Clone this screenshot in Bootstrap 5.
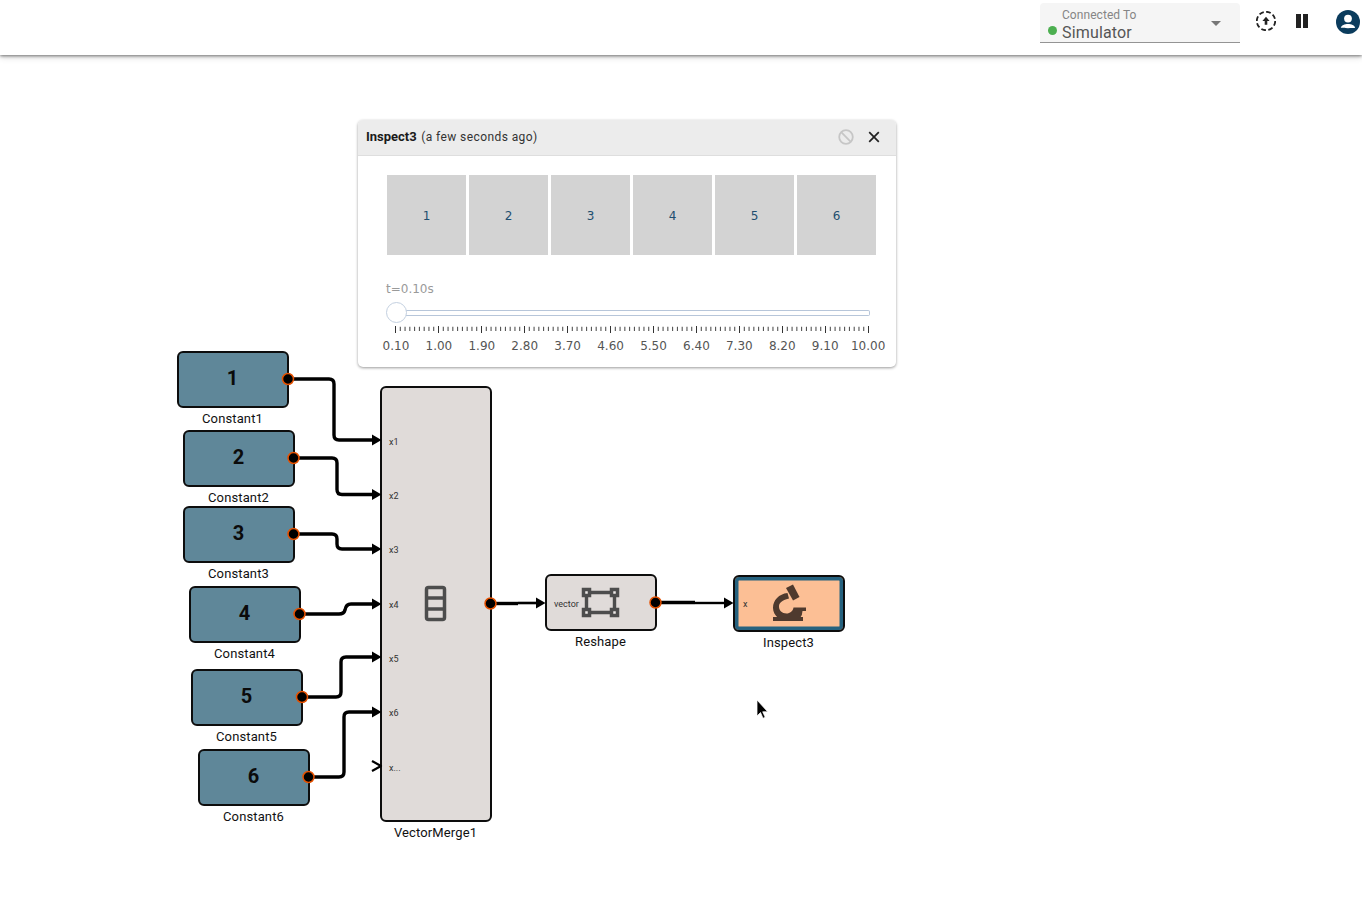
<!DOCTYPE html>
<html lang="en">
<head>
<meta charset="utf-8">
<title>Inspect3</title>
<link rel="stylesheet" href="https://cdn.jsdelivr.net/npm/bootstrap@5.3.0/dist/css/bootstrap.min.css">
<style>
html,body{height:100%;overflow:hidden;background:#fff}
body{font-family:Roboto,"Liberation Sans",sans-serif;color:#111}
.topbar{height:55px;background:#fff;padding:3px 2px 0 0;align-items:flex-start;position:relative;z-index:5;box-shadow:0 1px 3px rgba(0,0,0,.5),0 3px 6px rgba(0,0,0,.12)}
.conn{width:200px;height:40px;background:#f5f5f5;border-bottom:1px solid #949494;border-radius:4px 4px 0 0;padding:5px 0 0 22px;position:relative;margin-right:16px}
.conn-label{font-size:12px;line-height:14px;color:#858585;letter-spacing:.005em}
.conn-value{font-size:16px;line-height:19px;color:#555;letter-spacing:.01em;margin-top:1px}
.conn-dot{position:absolute;left:8px;top:23px;width:9px;height:9px;border-radius:50%;background:#4caf50}
.conn-caret{position:absolute;left:171px;top:18px;width:0;height:0;border-left:5.5px solid transparent;border-right:5.5px solid transparent;border-top:5px solid #777}
.tool{display:block;flex:none}
.ic-up{margin:8px 0 0 0}
.ic-pause{margin:10px 0 0 19px}
.ic-user{margin:7px 0 0 27px}
.ic-close{margin-left:14px}
.stage{position:relative;height:843px}
.wires{position:absolute;left:0;top:0;width:1362px;height:843px;z-index:2;pointer-events:none}
.blk{position:absolute;width:112px;height:57px;border:2px solid #0d0d0d;border-radius:6px;background:#5f8799;display:flex;align-items:center;justify-content:center;padding-bottom:3px;font-weight:700;font-size:20px;color:#0b0b0b}
.blk-label{position:absolute;left:-30px;right:-30px;top:calc(100% + 5px);text-align:center;font-weight:400;font-size:13px;line-height:16px;letter-spacing:.01em;color:#111}
.b1{left:176.500px;top:295.500px}
.b2{left:182.500px;top:374.500px}
.b3{left:182.500px;top:450.500px}
.b4{left:188.500px;top:530.500px}
.b5{left:190.500px;top:613.500px}
.b6{left:197.500px;top:693.500px}
.merge{left:379.500px;top:330.500px;height:436px;background:#e0dbd9}
.reshape{left:544.500px;top:518.500px;height:57px;background:#e0dbd9}
.inspect{left:732.500px;top:519.500px;height:57px;background:#fcbf95;box-shadow:inset 0 0 0 3.500px #26627f}
.insp-card{position:absolute;left:358px;top:65px;width:538px;height:247px;z-index:3;background:#fff;border:0;border-radius:5px;box-shadow:0 1px 3px rgba(0,0,0,.4)}
.insp-head{height:36px;background:#ececec;border-bottom:1px solid #dedede;border-radius:5px 5px 0 0!important;padding:0 16px 2px 8px;font-size:12px;color:#333;letter-spacing:.035em}
.insp-head b{color:#1a1a1a;font-weight:700;letter-spacing:0;font-size:13px;margin-right:1px}
.insp-body{padding:19px 0 0 29px}
.tiles{gap:3px}
.tile{width:79px;height:80px;background:#d3d3d3;color:#1f4e6f;padding-top:2px;font:12px "DejaVu Sans",sans-serif}
.t-lab{font:12px/15px "DejaVu Sans",sans-serif;color:#9a9a9a;margin:27px 0 0 -1px}
.slide{position:relative;height:24px;margin:6px 0 0 -1.5px;width:484.500px}
.rail{position:absolute;left:20px;right:0;top:6.500px;height:6px;border:1px solid #b7c6da;border-left:0;border-radius:0 2px 2px 0;background:#fff}
.thumb{position:absolute;left:0;top:-1.500px;width:21px;height:21px;border-radius:50%;background:#fff;border:1.5px solid #c3d0e0}
.ticks{display:block;width:490px;height:10px;margin:-1px 0 0 -1px}
.tick-labs{width:515px;margin:3px 0 0 -12.5px;font:12px/15px "DejaVu Sans",sans-serif;color:#555}
.tick-labs span{flex:1 1 0;text-align:center;white-space:nowrap}
.ptxt{font:9px Roboto,sans-serif;fill:#333}
</style>
</head>
<body>
<nav class="navbar topbar d-flex justify-content-end flex-nowrap">
  <div class="conn">
    <div class="conn-label">Connected To</div>
    <div class="conn-value">Simulator</div>
    <span class="conn-dot"></span>
    <span class="conn-caret"></span>
  </div>
  <svg class="tool ic-up" width="20" height="20" viewBox="0 0 20 20" aria-label="upload">
    <circle cx="10" cy="10" r="9.200" fill="none" stroke="#222" stroke-width="1.800" stroke-dasharray="4.800 2.400"/>
    <path d="M10 5.800l3.600 4.200h-2.300v3.800H8.700V10H6.400z" fill="#222"/>
  </svg>
  <svg class="tool ic-pause" width="14" height="16" viewBox="0 0 14 16" aria-label="pause">
    <path d="M1 1h5v14H1zM8 1h5v14H8z" fill="#222"/>
  </svg>
  <svg class="tool ic-user" width="24" height="24" viewBox="0 0 24 24" aria-label="account">
    <circle cx="12" cy="12" r="12" fill="#0b3c5d"/>
    <circle cx="12" cy="8.600" r="3.900" fill="#fff"/>
    <path d="M4.800 17.800c.4-2.700 4-3.900 7.200-3.900s6.800 1.200 7.200 3.900c-1.800 .5-12.600 .5-14.400 0z" fill="#fff"/>
  </svg>
</nav>

<main class="stage">
  <div class="blk b1">1<div class="blk-label">Constant1</div></div>
  <div class="blk b2">2<div class="blk-label">Constant2</div></div>
  <div class="blk b3">3<div class="blk-label">Constant3</div></div>
  <div class="blk b4">4<div class="blk-label">Constant4</div></div>
  <div class="blk b5">5<div class="blk-label">Constant5</div></div>
  <div class="blk b6">6<div class="blk-label">Constant6</div></div>
  <div class="blk merge"><div class="blk-label">VectorMerge1</div></div>
  <div class="blk reshape"><div class="blk-label">Reshape</div></div>
  <div class="blk inspect"><div class="blk-label">Inspect3</div></div>

  <svg class="wires" viewBox="0 55 1362 843">
    <g fill="none" stroke="#000" stroke-width="3.400" stroke-linejoin="round">
      <path d="M288 379H329Q334 379 334 384V435Q334 440 339 440H374"/>
      <path d="M293 458H332Q337 458 337 463V489.500Q337 494.500 342 494.500H374"/>
      <path d="M293 534H332Q337 534 337 539V544Q337 549 342 549H374"/>
      <path d="M299 614H339Q344 614 345 610Q346 604 351 604H374"/>
      <path d="M302 697H336Q341 697 341 692V662Q341 657 346 657H374"/>
      <path d="M309 777H339Q344 777 344 772V717Q344 712 349 712H374"/>
      <path d="M490 603.500H518"/>
      <path d="M518 603H538" stroke-width="2.600"/>
      <path d="M655 602.500H695"/>
      <path d="M695 603H726" stroke-width="2.400"/>
      <path d="M372 761L381 766L372 771" stroke-width="2.200"/>
    </g>
    <g fill="#000">
      <path d="M372 434.500l9.500 5.500-9.500 5.500zM372 489l9.500 5.500-9.500 5.500zM372 543.500l9.500 5.500-9.500 5.500zM372 598.500l9.500 5.500-9.500 5.500zM372 651.500l9.500 5.500-9.500 5.500zM372 706.500l9.500 5.500-9.500 5.500zM536 597.500l9.500 5.500-9.500 5.500zM724 597.500l9.500 5.500-9.500 5.500z"/>
    </g>
    <g fill="#000" stroke="#e65100" stroke-width="1.500">
      <circle cx="288" cy="379" r="5.500"/>
      <circle cx="293.500" cy="458" r="5.500"/>
      <circle cx="293.500" cy="534" r="5.500"/>
      <circle cx="299.500" cy="614" r="5.500"/>
      <circle cx="302" cy="697" r="5.500"/>
      <circle cx="308.500" cy="777" r="5.500"/>
      <circle cx="490.500" cy="603.500" r="5.500"/>
      <circle cx="655.500" cy="602.500" r="5.500"/>
    </g>
    <g class="ptxt">
      <text class="ptxt" x="389" y="445">x1</text>
      <text class="ptxt" x="389" y="499">x2</text>
      <text class="ptxt" x="389" y="553">x3</text>
      <text class="ptxt" x="389" y="608">x4</text>
      <text class="ptxt" x="389" y="662">x5</text>
      <text class="ptxt" x="389" y="716">x6</text>
      <text class="ptxt" x="389" y="771">x...</text>
      <text class="ptxt" x="554" y="607">vector</text>
      <text class="ptxt" x="743" y="607">x</text>
    </g>
    <g fill="none" stroke="#4d4d4d" stroke-width="3.500">
      <rect x="426.500" y="587.500" width="18" height="32" rx="2"/>
      <path d="M426.500 598H444.500M426.500 609H444.500"/>
    </g>
    <g stroke="#4d4d4d">
      <path d="M586.500 592.500H614.500V612.500H586.500Z" fill="none" stroke-width="3.400"/>
      <g fill="#eeeae8" stroke-width="3.500">
        <rect x="583.500" y="589.500" width="6" height="6"/>
        <rect x="611.500" y="589.500" width="6" height="6"/>
        <rect x="583.500" y="609.500" width="6" height="6"/>
        <rect x="611.500" y="609.500" width="6" height="6"/>
      </g>
    </g>
    <g fill="#4f3a2e">
      <path d="M773 617H803V621H773z"/>
      <path d="M787.500 593C779 594 773 600 773 608C773 612 775 615 778 618H800Q802.500 615 802.500 611H806V607.500H793.500C793 611 790 613.500 786.500 613.500C782 613.500 779 610.500 779 606.500C779 603 781.500 600.500 789 598.500z"/>
      <path d="M786 588L793 584.500L799.500 597L793 600.500z"/>
    </g>
    <path d="M757 700V716l3.500-3.500 2.500 5.800 2.200-1-2.500-5.500h5z" fill="#000" stroke="#fff" stroke-width="1" stroke-opacity=".75"/>
  </svg>

  <section class="card insp-card">
    <div class="card-header insp-head d-flex align-items-center">
      <span><b>Inspect3</b> (a few seconds ago)</span>
      <svg class="ms-auto" width="16" height="16" viewBox="0 0 16 16" aria-label="disabled">
        <circle cx="8" cy="8" r="6.800" fill="none" stroke="#c6c6c6" stroke-width="1.800"/>
        <path d="M3.200 3.200L12.800 12.800" stroke="#c6c6c6" stroke-width="1.800"/>
      </svg>
      <svg class="ic-close" width="12" height="12" viewBox="0 0 12 12" aria-label="close">
        <path d="M1.200 1.200L10.800 10.800M10.800 1.200L1.200 10.800" stroke="#222" stroke-width="1.700"/>
      </svg>
    </div>
    <div class="insp-body">
      <div class="tiles d-flex">
        <div class="tile d-flex align-items-center justify-content-center">1</div>
        <div class="tile d-flex align-items-center justify-content-center">2</div>
        <div class="tile d-flex align-items-center justify-content-center">3</div>
        <div class="tile d-flex align-items-center justify-content-center">4</div>
        <div class="tile d-flex align-items-center justify-content-center">5</div>
        <div class="tile d-flex align-items-center justify-content-center">6</div>
      </div>
      <div class="t-lab">t=0.10s</div>
      <div class="slide"><div class="rail"></div><div class="thumb"></div></div>
      <svg class="ticks" viewBox="0 0 490 10">
        <path d="M9 2.850H483" stroke="#444" stroke-width="4.300" stroke-dasharray="1 3.778"/>
        <path d="M9 3.500H483" stroke="#333" stroke-width="7" stroke-dasharray="1 42"/>
      </svg>
      <div class="tick-labs d-flex">
        <span>0.10</span><span>1.00</span><span>1.90</span><span>2.80</span><span>3.70</span><span>4.60</span><span>5.50</span><span>6.40</span><span>7.30</span><span>8.20</span><span>9.10</span><span>10.00</span>
      </div>
    </div>
  </section>
</main>
<script src="https://cdn.jsdelivr.net/npm/bootstrap@5.3.0/dist/js/bootstrap.bundle.min.js"></script>
</body>
</html>
